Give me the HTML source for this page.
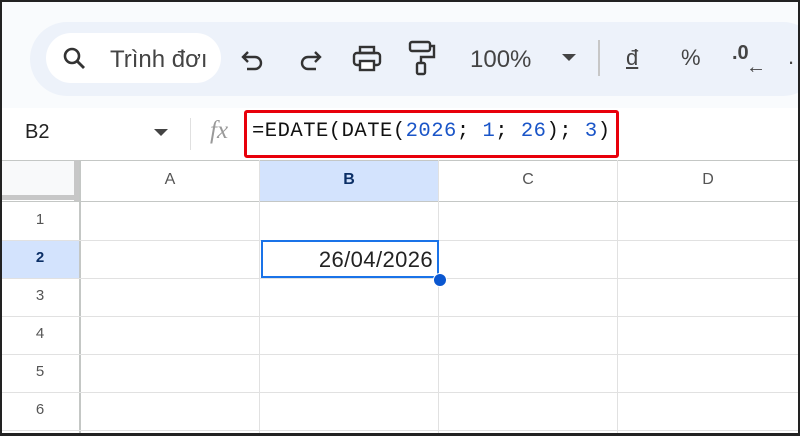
<!DOCTYPE html>
<html><head><style>
*{margin:0;padding:0;box-sizing:border-box}
body{width:800px;height:436px;overflow:hidden;background:#fff;font-family:"Liberation Sans",sans-serif;position:relative}
.frame{position:absolute;left:0;top:0;width:800px;height:436px;border:2px solid #222;border-bottom-width:3px;z-index:10;pointer-events:none}
.top{position:absolute;left:0;top:0;width:800px;height:108px;background:#f9fbfd}
.bar{position:absolute;left:30px;top:22px;width:790px;height:74px;background:#edf2fa;border-radius:37px}
.search{position:absolute;left:46px;top:33px;width:175px;height:50px;background:#fff;border-radius:25px}
.t{position:absolute;color:#444;font-size:24px}
.fb{position:absolute;left:0;top:108px;width:800px;height:52px;background:#fff}
.red{position:absolute;left:244px;top:110px;width:375px;height:48px;border:3px solid #e8000b;border-radius:3px}
.mono{font-family:"Liberation Mono",monospace;font-size:20.5px;position:absolute;left:252px;top:120px;color:#111;letter-spacing:0.5px}
.b{color:#1a55c8}
.g{position:absolute;background:#e1e1e1}
.hdr{position:absolute;color:#555;font-size:16px;text-align:center}
</style></head><body>
<div class="top"></div>
<div class="bar"></div>
<div class="search"></div>
<svg style="position:absolute;left:62px;top:46px" width="26" height="26" viewBox="0 0 26 26"><circle cx="10" cy="10" r="7" fill="none" stroke="#333" stroke-width="2.6"/><line x1="15" y1="15" x2="22" y2="22" stroke="#333" stroke-width="2.8"/></svg>
<div class="t" style="left:110px;top:46px">Trình đơı</div>
<svg style="position:absolute;left:240px;top:48px" width="26" height="24" viewBox="0 0 26 24"><path d="M8 4 L3 9 L8 14 M3 9 H15 a6 6 0 0 1 0 12 H7" fill="none" stroke="#333" stroke-width="2.4"/></svg>
<svg style="position:absolute;left:297px;top:48px" width="26" height="24" viewBox="0 0 26 24"><path d="M18 4 L23 9 L18 14 M23 9 H11 a6 6 0 0 0 0 12 H19" fill="none" stroke="#333" stroke-width="2.4"/></svg>
<svg style="position:absolute;left:352px;top:45px" width="30" height="28" viewBox="0 0 30 28"><rect x="8" y="2" width="14" height="6" fill="none" stroke="#333" stroke-width="2.4"/><rect x="2" y="8" width="26" height="12" rx="3" fill="none" stroke="#333" stroke-width="2.4"/><rect x="8" y="16" width="14" height="9" fill="#fff" stroke="#333" stroke-width="2.4"/></svg>
<svg style="position:absolute;left:408px;top:40px" width="28" height="36" viewBox="0 0 28 36"><rect x="2" y="2" width="20" height="9" rx="2" fill="none" stroke="#333" stroke-width="2.4"/><path d="M22 6 H26 V17 H13 V23" fill="none" stroke="#333" stroke-width="2.4"/><rect x="9" y="23" width="8" height="11" rx="1.5" fill="none" stroke="#333" stroke-width="2.4"/></svg>
<div class="t" style="left:470px;top:46px">100%</div>
<svg style="position:absolute;left:562px;top:54px" width="14" height="8"><path d="M0 0 H14 L7 7Z" fill="#444"/></svg>
<div style="position:absolute;left:598px;top:40px;width:2px;height:36px;background:#c7c7c7"></div>
<div class="t" style="left:626px;top:45px;font-size:22px;text-decoration:underline">đ</div>
<div class="t" style="left:681px;top:45px;font-size:22px">%</div>
<div class="t" style="left:732px;top:42px;font-size:20px;font-weight:bold">.0</div>
<div class="t" style="left:746px;top:56px;font-size:20px;font-weight:bold">←</div>
<div class="t" style="left:788px;top:44px;font-size:22px">.</div>
<div class="fb"></div>
<div class="t" style="left:25px;top:121px;font-size:20px;color:#222">B2</div>
<svg style="position:absolute;left:154px;top:129px" width="14" height="8"><path d="M0 0 H14 L7 7Z" fill="#444"/></svg>
<div style="position:absolute;left:190px;top:118px;width:1px;height:32px;background:#e0e0e0"></div>
<div class="t" style="left:210px;top:117px;font-family:'Liberation Serif',serif;font-style:italic;font-size:25px;color:#999">fx</div>
<div class="red"></div>
<div class="mono">=EDATE(DATE(<span class="b">2026</span>; <span class="b">1</span>; <span class="b">26</span>); <span class="b">3</span>)</div>
<div style="position:absolute;left:0;top:160px;width:800px;height:42px;background:#fff"></div>
<div style="position:absolute;left:0;top:160px;width:74px;height:36px;background:#f8f9fa"></div>
<div style="position:absolute;left:260px;top:160px;width:178px;height:41px;background:#d3e3fd"></div>
<div style="position:absolute;left:0;top:240px;width:80px;height:38px;background:#d3e3fd"></div>
<div class="g" style="left:0;top:160px;width:800px;height:1px;background:#c4c7c5"></div>
<div class="g" style="left:74px;top:160px;width:5px;height:41px;background:#c7c7c7"></div>
<div class="g" style="left:0;top:195px;width:79px;height:5px;background:#c7c7c7"></div>
<div class="g" style="left:0;top:201px;width:800px;height:1px;background:#c4c7c5"></div>
<div class="g" style="left:79px;top:160px;width:2px;height:276px;background:#c4c7c5"></div>
<div class="g" style="left:259px;top:160px;width:1px;height:276px"></div>
<div class="g" style="left:438px;top:160px;width:1px;height:276px"></div>
<div class="g" style="left:617px;top:160px;width:1px;height:276px"></div>
<div class="g" style="left:0;top:240px;width:800px;height:1px"></div>
<div class="g" style="left:0;top:278px;width:800px;height:1px"></div>
<div class="g" style="left:0;top:316px;width:800px;height:1px"></div>
<div class="g" style="left:0;top:354px;width:800px;height:1px"></div>
<div class="g" style="left:0;top:392px;width:800px;height:1px"></div>
<div class="g" style="left:0;top:430px;width:800px;height:1px"></div>
<div class="hdr" style="left:81px;top:171px;width:178px">A</div>
<div class="hdr" style="left:260px;top:171px;width:178px;color:#0b2f66;font-weight:bold">B</div>
<div class="hdr" style="left:439px;top:171px;width:178px">C</div>
<div class="hdr" style="left:618px;top:171px;width:180px">D</div>
<div class="hdr" style="left:0;top:211px;width:80px;font-size:15px">1</div>
<div class="hdr" style="left:0;top:249px;width:80px;font-size:15px;color:#0b2f66;font-weight:bold">2</div>
<div class="hdr" style="left:0;top:287px;width:80px;font-size:15px">3</div>
<div class="hdr" style="left:0;top:325px;width:80px;font-size:15px">4</div>
<div class="hdr" style="left:0;top:363px;width:80px;font-size:15px">5</div>
<div class="hdr" style="left:0;top:401px;width:80px;font-size:15px">6</div>
<div style="position:absolute;left:261px;top:240px;width:178px;height:38px;border:2px solid #1a73e8"></div>
<div style="position:absolute;left:260px;top:247px;width:173px;text-align:right;font-size:22px;letter-spacing:0.4px;color:#222">26/04/2026</div>
<div style="position:absolute;left:433px;top:273px;width:14px;height:14px;border-radius:50%;background:#0b57d0;border:1.5px solid #fff"></div>
<div class="frame"></div>
</body></html>
